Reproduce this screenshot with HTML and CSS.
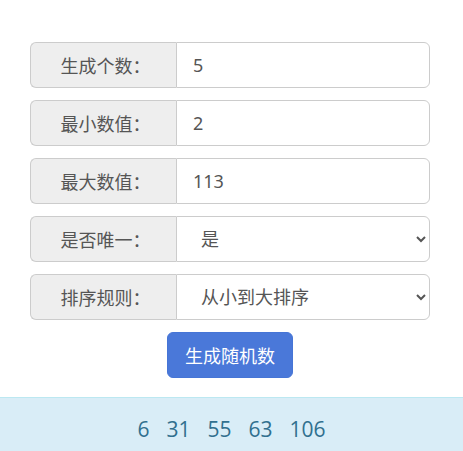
FILE: index.html
```html
<!DOCTYPE html>
<html lang="zh">
<head>
<meta charset="utf-8">
<title>随机数生成</title>
<link rel="stylesheet" href="styles.css">
</head>
<body>
<div class="form">
  <div class="group">
    <span class="label">生成个数：</span>
    <input class="field" type="text" value="5">
  </div>
  <div class="group">
    <span class="label">最小数值：</span>
    <input class="field" type="text" value="2">
  </div>
  <div class="group">
    <span class="label">最大数值：</span>
    <input class="field" type="text" value="113">
  </div>
  <div class="group">
    <span class="label">是否唯一：</span>
    <select class="field select">
      <option>是</option>
      <option>否</option>
    </select>
  </div>
  <div class="group">
    <span class="label">排序规则：</span>
    <select class="field select">
      <option>从小到大排序</option>
      <option>从大到小排序</option>
      <option>不排序</option>
    </select>
  </div>
  <div class="actions">
    <button class="btn" type="button">生成随机数</button>
  </div>
</div>
<div class="result">
  <span>6</span><span>31</span><span>55</span><span>63</span><span>106</span>
</div>
</body>
</html>
```

FILE: styles.css
```css
html, body {
  margin: 0;
  padding: 0;
  background: #fff;
  overflow: hidden;
}
body {
  font-family: "Noto Sans", "Noto Sans CJK SC", sans-serif;
  color: #555;
}
.form {
  width: 400px;
  padding: 42px 0 0 30px;
  display: flex;
  flex-direction: column;
  gap: 12px;
}
.group {
  display: flex;
  height: 46px;
}
.label {
  box-sizing: border-box;
  width: 146px;
  flex: none;
  display: flex;
  align-items: center;
  justify-content: center;
  padding-left: 4px;
  background: #eee;
  border: 1px solid #ccc;
  border-right: 0;
  border-radius: 6px 0 0 6px;
  font-size: 18px;
  color: #555;
}
.field {
  box-sizing: border-box;
  flex: 1;
  min-width: 0;
  height: 46px;
  margin: 0;
  padding: 0 16px;
  border: 1px solid #ccc;
  border-radius: 0 6px 6px 0;
  background: #fff;
  font-family: inherit;
  font-size: 18px;
  color: #555;
  outline: none;
}
.select {
  padding-left: 20px;
  padding-right: 6px;
}
.actions {
  display: flex;
  justify-content: center;
}
.btn {
  height: 46px;
  padding: 0 17px;
  border: 1px solid #4675d6;
  border-radius: 6px;
  background: #4a78d9;
  color: #fff;
  font-family: inherit;
  font-size: 18px;
}
.result {
  margin-top: 19px;
  padding: 17px 15px 20px;
  background: #d9edf7;
  border-top: 1px solid #bce8f1;
  color: #31708f;
  font-size: 21px;
  line-height: 28px;
  display: flex;
  justify-content: center;
  gap: 17px;
  font-family: "Open Sans", "Noto Sans", sans-serif;
}
```
